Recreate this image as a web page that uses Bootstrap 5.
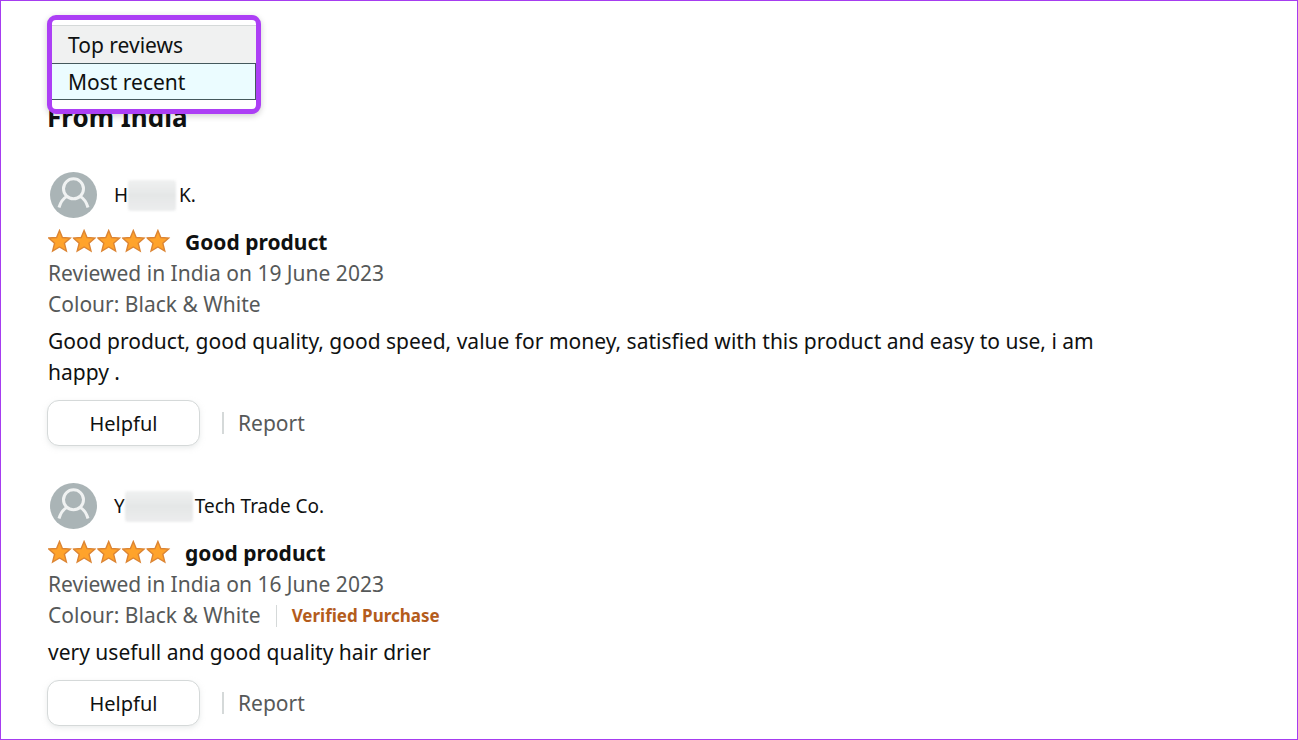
<!DOCTYPE html>
<html lang="en">
<head>
<meta charset="utf-8">
<meta name="viewport" content="width=device-width, initial-scale=1">
<title>Customer reviews</title>
<link href="https://cdn.jsdelivr.net/npm/bootstrap@5.3.0/dist/css/bootstrap.min.css" rel="stylesheet">
<style>
  body { font-family: "Noto Sans", "Open Sans", sans-serif; font-size: 21px; line-height: 31px; color: #0f1111; background: #fff; }
  .page-frame { border: 1px solid #a63df0; padding: 14px 46px 12px; }
  .sort-area { height: 86px; }
  .sort-menu { top: 0; left: 0; z-index: 2; width: 214px; padding: 5px 0 9px; background: #fff; border: 5px solid #ac3ff5; border-radius: 9px; box-shadow: 0 2px 6px rgba(15, 17, 17, .2); }
  .sort-option { display: block; width: 100%; height: 38px; padding: 2px 16px 0; border: 0; border-top: 1px solid #d5d9d9; background: #f0f1f1; color: #0f1111; text-align: left; font-size: 21px; }
  .sort-option.chosen { height: 37px; background: #ebfcff; border: 1px solid #44585c; border-left: 0; }
  .region-title { font-size: 26px; font-weight: 700; line-height: 32px; margin: 0 0 39px; }
  .review { max-width: 1060px; margin: 0 0 37px; padding-left: 1px; }
  .review:last-child { margin-bottom: 0; }
  .avatar { width: 47px; height: 46px; margin: 0 17px 0 2px; }
  .profile { font-size: 19px; line-height: 33px; margin-bottom: 9px; }
  .redacted { height: 31px; background: linear-gradient(#f0f1f1, #e5e7e7 50%, #ecedee); border-radius: 3px; filter: blur(1px); }
  .redacted.short { width: 48px; margin-right: 3px; }
  .redacted.long { width: 68px; margin-right: 2px; }
  .stars { width: 123px; height: 24px; margin: 0 14px 3px 0; }
  .review-title { font-size: 21px; font-weight: 700; line-height: 31px; margin: 0; }
  .meta { color: #565959; }
  .rule { width: 1px; height: 22px; background: #d5d9d9; }
  .meta .rule { margin: 0 15px; }
  .verified { color: #b45c1c; font-size: 17px; font-weight: 700; }
  .review-text { margin: 6px 0 12px; }
  .helpful { width: 153px; height: 46px; margin-left: -1px; background: #fff; border: 1px solid #d5d9d9; border-radius: 12px; box-shadow: 0 2px 5px rgba(213, 217, 217, .5); font-size: 20px; color: #0f1111; padding: 0; }
  .actions .rule { width: 2px; margin: 0 14px 0 22px; }
  .report { color: #565959; text-decoration: none; }
</style>
</head>
<body>
<svg class="d-none" aria-hidden="true">
  <symbol id="person" viewBox="0 0 47 46">
    <ellipse cx="23.500" cy="23" rx="23.500" ry="23" fill="#aab4b6"/>
    <g fill="none" stroke="#f0f2f2" stroke-width="3">
      <circle cx="23.500" cy="16.800" r="10"/>
      <path d="M9 35.500C10.500 30 13 26.500 17.500 24M38 35.500C36.500 30 34 26.500 29.500 24"/>
    </g>
  </symbol>
  <symbol id="star" viewBox="0 0 24 24">
    <path d="M11.500 1.500L14.400 8.500L22.300 9L16.400 14.200L18.400 22L11.500 18L4.600 22L6.600 14.200L0.700 9L8.600 8.500Z" fill="#ffa32b" stroke="#dc8534" stroke-width="1.400"/>
  </symbol>
  <symbol id="five-stars" viewBox="0 0 123 24">
    <use href="#star" x="0" width="24" height="24"/>
    <use href="#star" x="24.600" width="24" height="24"/>
    <use href="#star" x="49.200" width="24" height="24"/>
    <use href="#star" x="73.800" width="24" height="24"/>
    <use href="#star" x="98.400" width="24" height="24"/>
  </symbol>
</svg>
<main class="page-frame min-vh-100">
  <div class="position-relative">
    <div class="sort-area">
      <div class="sort-menu position-absolute" role="listbox" aria-label="Sort reviews">
        <button type="button" class="sort-option" role="option" aria-selected="false">Top reviews</button>
        <button type="button" class="sort-option chosen" role="option" aria-selected="true">Most recent</button>
      </div>
    </div>
    <h2 class="region-title">From India</h2>
  </div>

  <article class="review">
    <div class="profile d-flex align-items-center">
      <svg class="avatar" aria-hidden="true"><use href="#person"/></svg>
      <span>H</span><span class="redacted short"></span><span>K.</span>
    </div>
    <div class="d-flex align-items-center">
      <svg class="stars" role="img" aria-label="5 out of 5 stars"><use href="#five-stars"/></svg>
      <h3 class="review-title">Good product</h3>
    </div>
    <div class="meta">Reviewed in India on 19 June 2023</div>
    <div class="meta">Colour: Black &amp; White</div>
    <p class="review-text">Good product, good quality, good speed, value for money, satisfied with this product and easy to use, i am happy .</p>
    <div class="actions d-flex align-items-center">
      <button type="button" class="helpful">Helpful</button>
      <span class="rule"></span>
      <a href="#" class="report">Report</a>
    </div>
  </article>

  <article class="review">
    <div class="profile d-flex align-items-center">
      <svg class="avatar" aria-hidden="true"><use href="#person"/></svg>
      <span>Y</span><span class="redacted long"></span><span>Tech Trade Co.</span>
    </div>
    <div class="d-flex align-items-center">
      <svg class="stars" role="img" aria-label="5 out of 5 stars"><use href="#five-stars"/></svg>
      <h3 class="review-title">good product</h3>
    </div>
    <div class="meta">Reviewed in India on 16 June 2023</div>
    <div class="meta d-flex align-items-center">
      <span>Colour: Black &amp; White</span>
      <span class="rule"></span>
      <span class="verified">Verified Purchase</span>
    </div>
    <p class="review-text">very usefull and good quality hair drier</p>
    <div class="actions d-flex align-items-center">
      <button type="button" class="helpful">Helpful</button>
      <span class="rule"></span>
      <a href="#" class="report">Report</a>
    </div>
  </article>
</main>
<script src="https://cdn.jsdelivr.net/npm/bootstrap@5.3.0/dist/js/bootstrap.bundle.min.js"></script>
</body>
</html>
